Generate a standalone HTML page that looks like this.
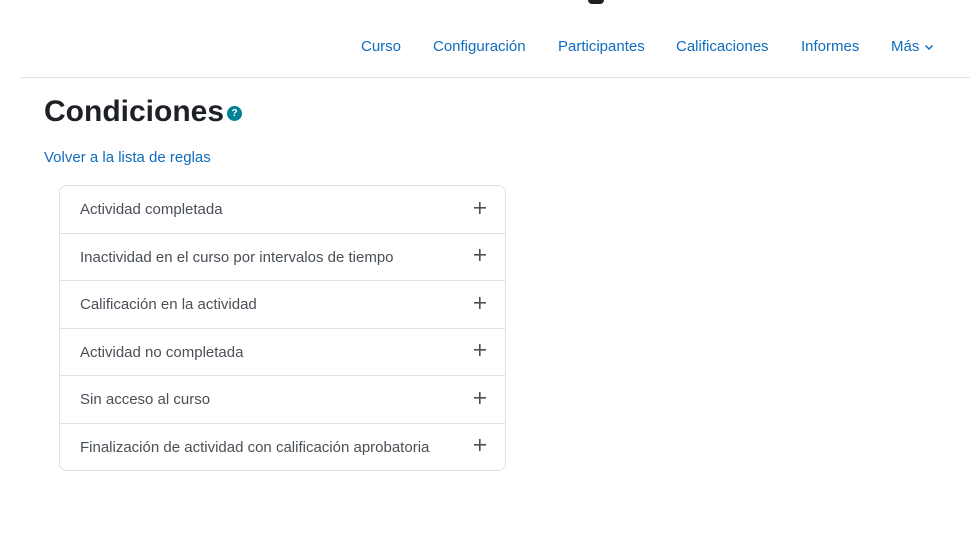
<!DOCTYPE html>
<html><head><meta charset="utf-8"><style>
*{box-sizing:border-box;margin:0;padding:0}
body{width:970px;height:550px;background:#fff;font-family:"Liberation Sans",sans-serif;position:relative;overflow:hidden}
.g{position:absolute;left:588px;top:0;width:16px;height:4px;background:#1d2125;border-radius:0 0 8px 8px}
.nav a{position:absolute;top:38px;font-size:15px;color:#0f6cbf;text-decoration:none}
.hr{position:absolute;left:21px;top:77px;width:949px;height:1px;background:#dee2e6}
h1{position:absolute;left:44px;top:95px;font-size:30px;font-weight:bold;color:#1d2125}
.help{position:absolute;left:227px;top:106px;width:15px;height:15px;border-radius:50%;background:#008196;color:#fff;font-size:10px;font-weight:bold;text-align:center;line-height:15px}
.back{position:absolute;left:44px;top:149px;font-size:15px;color:#0f6cbf}
.box{position:absolute;left:59px;top:185px;width:447px;height:286px;border:1px solid #dee2e6;border-radius:8px;overflow:hidden}
.row{height:47.5px;border-bottom:1px solid #dee2e6;padding-left:20px;font-size:15px;color:#495057;line-height:47px;position:relative}
.row:last-child{border-bottom:none}
.row:after{content:"";position:absolute;right:19px;top:15px;width:13px;height:13px;background:linear-gradient(#495057,#495057) center/12px 1.6px no-repeat,linear-gradient(#495057,#495057) center/1.6px 12px no-repeat}
</style></head><body>
<div class="g"></div>
<div class="nav">
<a style="left:361px">Curso</a>
<a style="left:433px">Configuración</a>
<a style="left:558px">Participantes</a>
<a style="left:676px">Calificaciones</a>
<a style="left:801px">Informes</a>
<a style="left:891px">Más <svg width="10" height="8" viewBox="0 0 10 8" style="vertical-align:middle"><path d="M1.5 2.5L5 6 8.5 2.5" fill="none" stroke="#0f6cbf" stroke-width="1.5"/></svg></a>
</div>
<div class="hr"></div>
<h1>Condiciones</h1><div class="help">?</div>
<div class="back">Volver a la lista de reglas</div>
<div class="box">
<div class="row">Actividad completada</div>
<div class="row">Inactividad en el curso por intervalos de tiempo</div>
<div class="row">Calificación en la actividad</div>
<div class="row">Actividad no completada</div>
<div class="row">Sin acceso al curso</div>
<div class="row">Finalización de actividad con calificación aprobatoria</div>
</div>
</body></html>
